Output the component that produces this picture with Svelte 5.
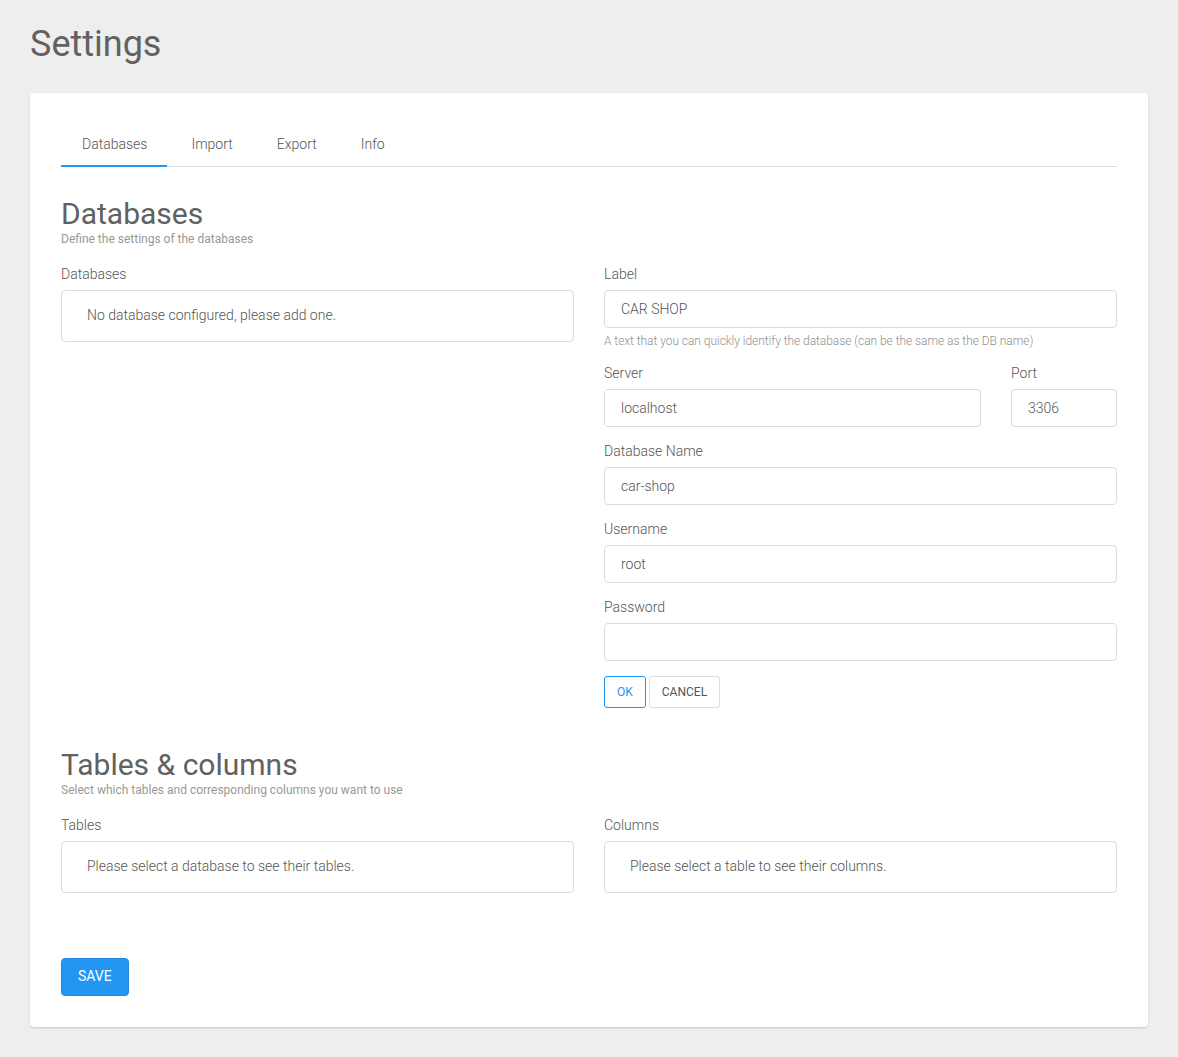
<script>
  let label = $state('CAR SHOP');
  let server = $state('localhost');
  let port = $state('3306');
  let dbName = $state('car-shop');
  let username = $state('root');
  let password = $state('');
  const tabs = ['Databases', 'Import', 'Export', 'Info'];
  let active = $state('Databases');
</script>

<div class="page">
  <h1>Settings</h1>
  <div class="card">
    <div class="tabs">
      {#each tabs as tab}
        <button class="tab" class:active={active === tab} onclick={() => (active = tab)}>{tab}</button>
      {/each}
    </div>

    <h2 class="first">Databases</h2>
    <p class="sub">Define the settings of the databases</p>
    <div class="cols">
      <div>
        <div class="label">Databases</div>
        <div class="list">No database configured, please add one.</div>
      </div>
      <div>
        <div class="field">
          <label for="label">Label</label>
          <input id="label" bind:value={label} />
          <p class="hint">A text that you can quickly identify the database (can be the same as the DB name)</p>
        </div>
        <div class="row">
          <div class="field grow">
            <label for="server">Server</label>
            <input id="server" bind:value={server} />
          </div>
          <div class="field port">
            <label for="port">Port</label>
            <input id="port" bind:value={port} />
          </div>
        </div>
        <div class="field">
          <label for="db">Database Name</label>
          <input id="db" bind:value={dbName} />
        </div>
        <div class="field">
          <label for="user">Username</label>
          <input id="user" bind:value={username} />
        </div>
        <div class="field">
          <label for="pass">Password</label>
          <input id="pass" type="password" bind:value={password} />
        </div>
        <div class="actions">
          <button class="btn ok">OK</button>
          <button class="btn">CANCEL</button>
        </div>
      </div>
    </div>

    <h2 class="second">Tables &amp; columns</h2>
    <p class="sub">Select which tables and corresponding columns you want to use</p>
    <div class="cols">
      <div>
        <div class="label">Tables</div>
        <div class="list">Please select a database to see their tables.</div>
      </div>
      <div>
        <div class="label">Columns</div>
        <div class="list">Please select a table to see their columns.</div>
      </div>
    </div>

    <button class="save">SAVE</button>
  </div>
</div>

<style>
  :global(body) {
    margin: 0;
    background: #eeeeee;
    font-family: Roboto, "Liberation Sans", sans-serif;
    font-weight: 300;
    color: #555555;
  }

  .page {
    padding: 21px 30px 30px;
  }

  h1 {
    margin: 0 0 26px;
    font-size: 36px;
    line-height: 46px;
    font-weight: 400;
    color: #616161;
  }

  .card {
    background: #fff;
    border-radius: 4px;
    box-shadow: 0 1px 2px rgba(0, 0, 0, 0.15);
    padding: 30px 31px 31px;
  }

  .tabs {
    display: flex;
    border-bottom: 1px solid #dddddd;
  }

  .tab {
    background: none;
    border: 0;
    border-bottom: 2px solid transparent;
    margin-bottom: -1px;
    padding: 0 20px 0 21px;
    margin-right: 3px;
    height: 44px;
    font: inherit;
    font-size: 14px;
    color: #555;
    cursor: pointer;
  }

  .tab.active {
    border-bottom-color: #2196f3;
  }

  h2 {
    margin: 0;
    font-size: 30px;
    line-height: 36px;
    font-weight: 400;
    color: #616161;
  }

  h2.first {
    margin-top: 29px;
  }

  h2.second {
    margin-top: 39px;
  }

  .sub {
    margin: 0 0 20px;
    font-size: 12px;
    line-height: 14px;
    font-weight: 400;
    color: #999;
  }

  .cols {
    display: grid;
    grid-template-columns: 1fr 1fr;
    gap: 30px;
  }

  .label,
  label {
    display: block;
    font-size: 14px;
    line-height: 17px;
    margin-bottom: 7px;
  }

  .list {
    border: 1px solid #ddd;
    border-radius: 4px;
    padding: 15px 25px 17px;
    font-size: 14px;
    line-height: 18px;
  }

  .field {
    margin-bottom: 16px;
  }

  .row {
    display: flex;
    gap: 30px;
  }

  .grow {
    flex: 1;
  }

  .port {
    width: 106px;
  }

  input {
    display: block;
    box-sizing: border-box;
    width: 100%;
    height: 38px;
    border: 1px solid #ddd;
    border-radius: 4px;
    padding: 0 16px;
    font: inherit;
    font-size: 14px;
    color: #555;
    outline: none;
  }

  .hint {
    margin: 6px 0 0;
    padding-bottom: 1px;
    font-size: 12px;
    line-height: 14px;
    letter-spacing: -0.05px;
    color: #909090;
  }

  .actions {
    display: flex;
    gap: 3px;
    margin-top: -1px;
  }

  .btn {
    height: 32px;
    padding: 0 12px;
    background: #fff;
    border: 1px solid #ddd;
    border-radius: 3px;
    font: inherit;
    font-size: 12px;
    font-weight: 400;
    color: #555;
    cursor: pointer;
  }

  .btn.ok {
    border-color: #2196f3;
    color: #2196f3;
  }

  .save {
    display: block;
    margin-top: 65px;
    height: 38px;
    padding: 0 16px 2px;
    background: #2196f3;
    border: 1px solid #1e88e5;
    border-radius: 4px;
    color: #fff;
    font: inherit;
    font-size: 14px;
    font-weight: 400;
    cursor: pointer;
  }
</style>
